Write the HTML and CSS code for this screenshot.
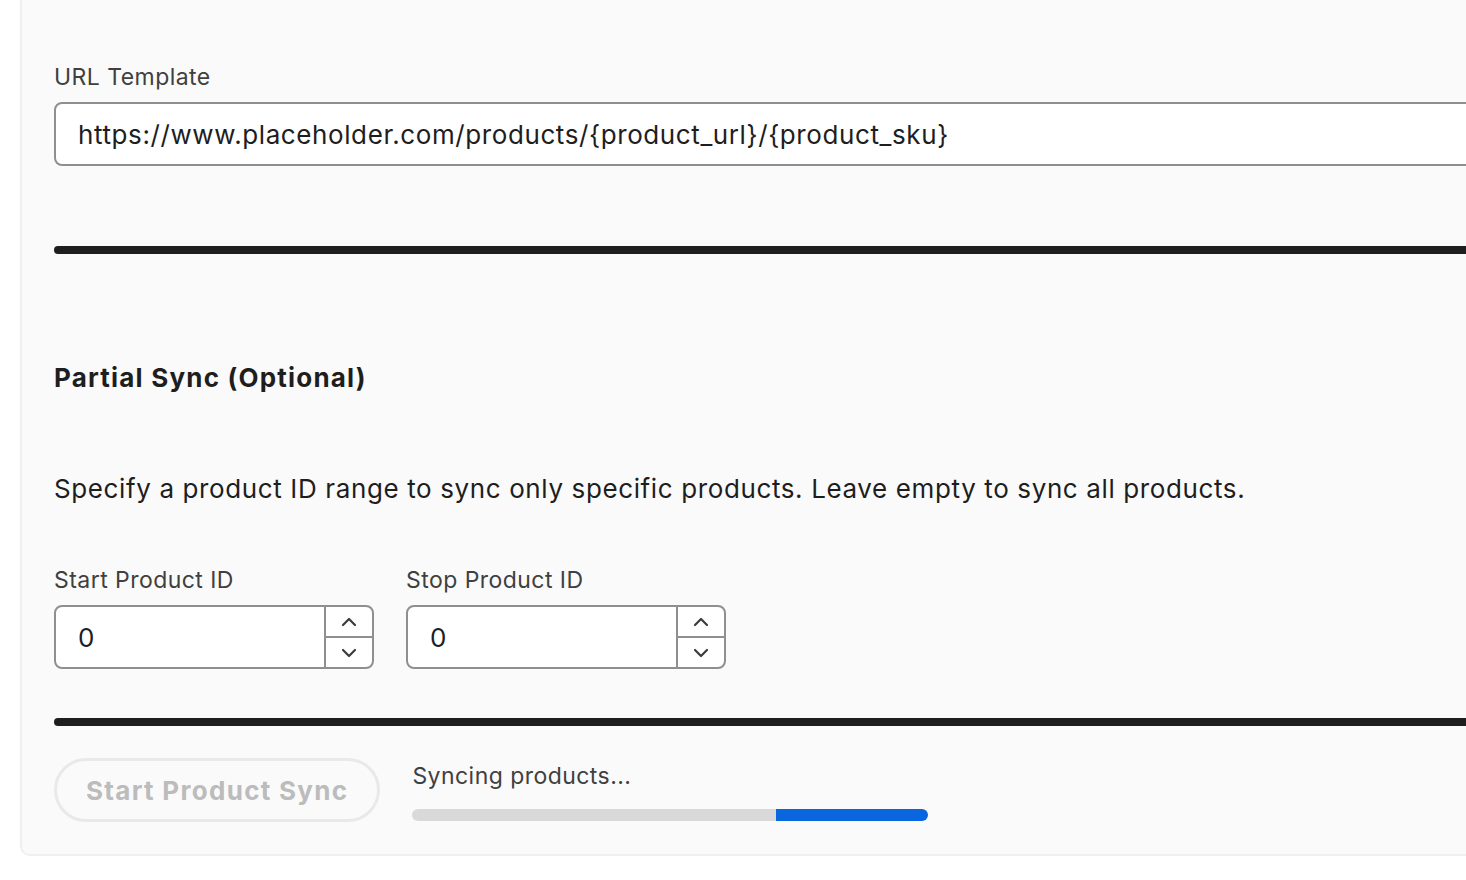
FILE: index.html
```html
<!DOCTYPE html>
<html lang="en">
<head>
<meta charset="utf-8">
<title>Product Sync</title>
<link rel="stylesheet" href="styles.css">
</head>
<body>
<div class="page">
  <section class="card">
    <div class="field">
      <label class="label" for="url">URL Template</label>
      <input class="text-input" id="url" type="text" value="https://www.placeholder.com/products/{product_url}/{product_sku}">
    </div>

    <hr class="divider divider-top">

    <h2 class="heading">Partial Sync (Optional)</h2>
    <p class="desc">Specify a product ID range to sync only specific products. Leave empty to sync all products.</p>

    <div class="range">
      <div class="field small">
        <label class="label">Start Product ID</label>
        <div class="number">
          <span class="number-value">0</span>
          <div class="spin">
            <span class="spin-btn"><svg width="18" height="12" viewBox="0 0 18 12"><path d="M3 9 L9 3 L15 9" fill="none" stroke="#3c3c3c" stroke-width="2.2" stroke-linecap="round" stroke-linejoin="round"/></svg></span>
            <span class="spin-btn bottom"><svg width="18" height="12" viewBox="0 0 18 12"><path d="M3 3 L9 9 L15 3" fill="none" stroke="#3c3c3c" stroke-width="2.2" stroke-linecap="round" stroke-linejoin="round"/></svg></span>
          </div>
        </div>
      </div>
      <div class="field small">
        <label class="label">Stop Product ID</label>
        <div class="number">
          <span class="number-value">0</span>
          <div class="spin">
            <span class="spin-btn"><svg width="18" height="12" viewBox="0 0 18 12"><path d="M3 9 L9 3 L15 9" fill="none" stroke="#3c3c3c" stroke-width="2.2" stroke-linecap="round" stroke-linejoin="round"/></svg></span>
            <span class="spin-btn bottom"><svg width="18" height="12" viewBox="0 0 18 12"><path d="M3 3 L9 9 L15 3" fill="none" stroke="#3c3c3c" stroke-width="2.2" stroke-linecap="round" stroke-linejoin="round"/></svg></span>
          </div>
        </div>
      </div>
    </div>

    <hr class="divider divider-bottom">

    <div class="actions">
      <button class="sync-btn" disabled>Start Product Sync</button>
      <div class="status">
        <div class="status-text">Syncing products...</div>
        <div class="progress"><span class="progress-rest"></span><span class="progress-fill"></span></div>
      </div>
    </div>
  </section>
</div>
</body>
</html>
```

FILE: styles.css
```css
html, body {
  margin: 0;
  padding: 0;
  background: #ffffff;
  overflow: hidden;
}

body {
  font-family: Inter, "Liberation Sans", sans-serif;
  color: #1e1e1e;
}

.page {
  padding: 0 0 24px 20px;
  width: 1600px;
}

.card {
  background: #fafafa;
  border: 2px solid #efefef;
  border-top: 0;
  border-radius: 0 0 10px 10px;
  padding: 62px 32px 32px 32px;
}

.field {
  display: flex;
  flex-direction: column;
}

.label {
  font-size: 23px;
  line-height: 30px;
  color: #404040;
  margin-bottom: 10px;
  letter-spacing: 0.45px;
}

.text-input {
  box-sizing: border-box;
  height: 64px;
  width: 100%;
  border: 2px solid #8f8f8f;
  border-radius: 8px;
  background: #ffffff;
  font-family: inherit;
  font-size: 26px;
  letter-spacing: 0.6px;
  color: #1e1e1e;
  padding: 0 22px;
  outline: none;
}

.divider {
  border: 0;
  height: 8px;
  background: #1e1e1e;
  border-radius: 4px;
  margin: 0;
}

.divider-top {
  margin-top: 80px;
}

.heading {
  font-size: 26px;
  font-weight: 700;
  line-height: 34px;
  letter-spacing: 1.2px;
  margin: 107px 0 0 0;
  color: #1e1e1e;
}

.desc {
  font-size: 26px;
  line-height: 34px;
  letter-spacing: 0.62px;
  margin: 77px 0 0 0;
  color: #1e1e1e;
}

.range {
  display: flex;
  gap: 32px;
  margin-top: 59px;
}

.small {
  width: 320px;
}

.number {
  box-sizing: border-box;
  height: 64px;
  display: flex;
  border: 2px solid #8f8f8f;
  border-radius: 8px;
  background: #ffffff;
  overflow: hidden;
}

.number-value {
  flex: 1;
  display: flex;
  align-items: center;
  padding-left: 22px;
  font-size: 26px;
  color: #1e1e1e;
}

.spin {
  width: 46px;
  border-left: 2px solid #8f8f8f;
  display: flex;
  flex-direction: column;
}

.spin-btn {
  flex: 1;
  display: flex;
  align-items: center;
  justify-content: center;
}

.spin-btn.bottom {
  border-top: 2px solid #8f8f8f;
}

.divider-bottom {
  margin-top: 49px;
}

.actions {
  display: flex;
  align-items: flex-end;
  gap: 32px;
  margin-top: 32px;
}

.sync-btn {
  box-sizing: border-box;
  height: 64px;
  padding: 0 29px;
  border: 3px solid #e9e9e9;
  border-radius: 32px;
  background: transparent;
  font-family: inherit;
  font-size: 26px;
  font-weight: 700;
  letter-spacing: 1.3px;
  color: #bcbcbc;
}

.status {
  display: flex;
  flex-direction: column;
  gap: 18px;
  padding-bottom: 1px;
}

.status-text {
  font-size: 23px;
  line-height: 30px;
  letter-spacing: 0.45px;
  color: #404040;
}

.progress {
  width: 516px;
  height: 12px;
  border-radius: 6px;
  overflow: hidden;
  display: flex;
}

.progress-rest {
  flex: 1;
  background: #d9d9d9;
}

.progress-fill {
  width: 152px;
  background: #0a66de;
}
```
